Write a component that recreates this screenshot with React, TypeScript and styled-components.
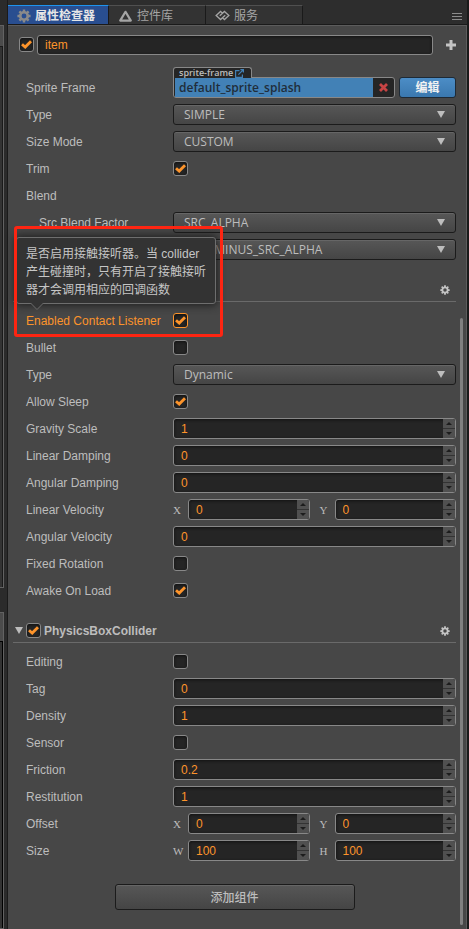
import React, { useId, useState } from "react";
import styled, { createGlobalStyle, css } from "styled-components";

const sans = `"Liberation Sans", Arial, "Noto Sans CJK SC", sans-serif`;
const ui = `"Open Sans", "Noto Sans CJK SC", sans-serif`;
const orange = "#fd942b";

const GlobalStyle = createGlobalStyle`
  *, *::before, *::after { box-sizing: border-box; }
  html, body, #root { height: 100%; }
  body { margin: 0; background: #2b2b2b; color: #bdbdbd; font: 12px/18px ${sans}; overflow: hidden; }
  button, input, select { font: inherit; color: inherit; margin: 0; }
  button { cursor: pointer; }
  svg { display: block; flex: none; }
`;

/* ---------- icons ---------- */

const Gear = ({ size }: { size: number }) => (
  <svg width={size} height={size} viewBox="0 0 16 16" fill="none" stroke="currentColor">
    <circle cx="8" cy="8" r="4.3" strokeWidth="3" />
    <path
      strokeWidth="2.8"
      d="M8 .5v3M8 12.5v3M.5 8h3M12.5 8h3M2.7 2.7l2.1 2.1M11.2 11.2l2.1 2.1M2.7 13.3l2.1-2.1M11.2 4.8l2.1-2.1"
    />
  </svg>
);

const Triangle = () => (
  <svg width="15" height="12" viewBox="0 0 15 12" fill="none" stroke="currentColor">
    <path d="M7.5 1.8 12.8 10.6H2.2Z" strokeWidth="2.2" strokeLinejoin="round" />
  </svg>
);

const Links = () => (
  <svg width="15" height="11" viewBox="0 0 17 12" fill="none" stroke="currentColor">
    <path
      d="M8.2 3.2 6.3 1.4 1.3 6l5 4.6L11.6 5.6M5.4 6.4l5.3-5L15.7 6l-5 4.6-1.9-1.8"
      strokeWidth="1.5"
    />
  </svg>
);

const Bars = () => (
  <svg width="10" height="9" viewBox="0 0 10 9" stroke="currentColor">
    <path d="M0 1.5h10M0 4.5h10M0 7.5h10" />
  </svg>
);

const Plus = () => (
  <svg width="10" height="10" viewBox="0 0 10 10" stroke="currentColor" strokeWidth="3">
    <path d="M5 0v10M0 5h10" />
  </svg>
);

const Check = () => (
  <svg width="11" height="9" viewBox="0 0 11 9" fill="none" stroke={orange} strokeWidth="2.8">
    <path d="M1 4.2 4.2 7.1 10 1.2" />
  </svg>
);

const Cross = () => (
  <svg width="9" height="9" viewBox="0 0 9 9" stroke="#c84444" strokeWidth="2.8">
    <path d="M1 1l7 7M8 1 1 8" />
  </svg>
);

const Popout = () => (
  <svg width="9" height="9" viewBox="0 0 9 9" fill="none" stroke="#4281b6" strokeWidth="1.2">
    <path d="M4.5 1.6H.6v6.8h6.8V5.5M3.4 5.6 8 1M5.4.6h3v3" />
  </svg>
);

const Arrow = ({ up, small }: { up?: boolean; small?: boolean }) => (
  <svg width={small ? 6 : 8} height={small ? 3 : 7} viewBox="0 0 8 7" preserveAspectRatio="none" fill="currentColor">
    <path d={up ? "M0 7h8L4 0z" : "M0 0h8L4 7z"} />
  </svg>
);

/* ---------- frame ---------- */

const Window = styled.div`
  display: flex;
  min-height: 100%;
  background: #2b2b2b;
`;

const Neighbours = styled.div`
  width: 7px;
  flex: none;
  display: flex;
  flex-direction: column;
  gap: 24px;
  padding-top: 25px;
`;

const NeighbourPanel = styled.div<{ $grow: number; $header: number; $edge: string }>`
  flex: ${(p) => p.$grow} 1 0;
  width: 4px;
  padding-top: ${(p) => p.$header}px;
  background: #4b4b4b;
  border: solid #626262;
  border-width: 1px 1px 1px 0;
  &::after {
    content: "";
    display: block;
    height: 100%;
    background: #333;
    border: solid ${(p) => p.$edge};
    border-width: 1px 1px 0 0;
  }
`;

const Inspector = styled.main`
  flex: 1;
  min-width: 0;
  display: flex;
  flex-direction: column;
  border: solid #1a1a1a;
  border-width: 0 2px 0 1px;
`;

const TabBar = styled.div`
  display: flex;
  align-items: flex-end;
  height: 25px;
  background: #2d2d2d;
  border-bottom: 1px solid #1a1a1a;
`;

const Tab = styled.button<{ $active?: boolean }>`
  display: flex;
  align-items: center;
  gap: 4px;
  width: 97px;
  height: 19px;
  padding: 1px 8px 0 9px;
  border: 0;
  border-top: 1px solid #505050;
  border-right: 1px solid #1a1a1a;
  background: #333;
  color: #a5a5a5;
  font-size: 12px;
  line-height: 18px;
  white-space: nowrap;
  ${(p) =>
    p.$active &&
    css`
      width: 101px;
      border-top-color: #1e94ee;
      background: #294e90;
      color: #e6e6e6;
      font-weight: 700;
      svg { color: #8a8a8a; }
    `}
`;

const MenuButton = styled.button`
  margin-left: auto;
  padding: 4px 5px 3px;
  border: 0;
  background: none;
  color: #8c8c8c;
`;

const Body = styled.div`
  flex: 1;
  display: flex;
  background: #474747;
  border: solid #5c5c5c;
  border-width: 1px 1px 0 0;
`;

const Content = styled.div`
  flex: 1;
  min-width: 0;
  padding: 5px 4px 19px 5px;
`;

const Scrollbar = styled.div`
  width: 3px;
  margin: 292px 3px 4px 0;
  border-radius: 2px;
  background: #808080;
`;

/* ---------- controls ---------- */

const well = css`
  border: 1px solid #888;
  border-radius: 3px;
  background: #252525;
  box-shadow: inset 0 1px 3px #111;
`;

const TickBox = styled.span<{ $hot?: boolean }>`
  display: inline-grid;
  width: 15px;
  height: 15px;
  place-items: center;
  color: ${(p) => (p.$hot ? orange : "#888")};
  input, svg { grid-area: 1 / 1; }
  svg { pointer-events: none; z-index: 1; }
  input {
    ${well}
    appearance: none;
    width: 15px;
    height: 15px;
    border-color: currentColor;
  }
`;

function Tick({ id, checked, hot, label }: { id?: string; checked?: boolean; hot?: boolean; label?: string }) {
  const [on, setOn] = useState(!!checked);
  return (
    <TickBox $hot={hot}>
      <input id={id} type="checkbox" aria-label={label} checked={on} onChange={() => setOn(!on)} />
      {on && <Check />}
    </TickBox>
  );
}

const SelectBox = styled.span`
  display: grid;
  align-items: center;
  color: #bdbdbd;
  select, svg { grid-area: 1 / 1; }
  svg { justify-self: end; margin-right: 11px; pointer-events: none; }
  select {
    appearance: none;
    width: 100%;
    height: 21px;
    padding: 0 24px 0 10px;
    border: 1px solid #1b1b1b;
    border-radius: 3px;
    background: linear-gradient(#575757, #454545);
    box-shadow: inset 0 1px #666;
    font: 12px/18px ${ui};
  }
`;

function Select({ id, value, label }: { id?: string; value: string; label?: string }) {
  return (
    <SelectBox>
      <select id={id} aria-label={label} defaultValue={value}>
        <option>{value}</option>
      </select>
      <Arrow />
    </SelectBox>
  );
}

const NumberBox = styled.span`
  ${well}
  flex: 1;
  min-width: 0;
  display: flex;
  height: 21px;
  overflow: hidden;
  input {
    flex: 1;
    min-width: 0;
    padding: 0 7px;
    border: 0;
    background: none;
    color: ${orange};
  }
`;

const Stepper = styled.span`
  display: grid;
  grid-template-rows: 1fr 1fr;
  gap: 1px;
  width: 12px;
  background: #333;
  button {
    display: grid;
    place-items: center;
    min-height: 0;
    padding: 0;
    border: 0;
    background: #505050;
    color: #1c1c1c;
  }
`;

function NumberField({ id, value, label }: { id?: string; value: number; label?: string }) {
  const [text, setText] = useState(String(value));
  const step = (by: number) => setText(String(Number(text) + by));
  return (
    <NumberBox>
      <input id={id} aria-label={label} inputMode="decimal" value={text} onChange={(e) => setText(e.target.value)} />
      <Stepper>
        <button type="button" aria-label="+" onClick={() => step(1)}>
          <Arrow up small />
        </button>
        <button type="button" aria-label="-" onClick={() => step(-1)}>
          <Arrow small />
        </button>
      </Stepper>
    </NumberBox>
  );
}

const Pair = styled.span`
  display: flex;
  gap: 10px;
  min-width: 0;
`;

const Axis = styled.label`
  flex: 1;
  min-width: 0;
  display: flex;
  align-items: center;
  > b {
    width: 15px;
    font: 11px/18px "Liberation Serif", serif;
  }
`;

function Vector({ axes, values }: { axes: string; values: [number, number] }) {
  const id = useId();
  return (
    <Pair>
      {values.map((v, i) => (
        <Axis key={i} htmlFor={id + i}>
          <b>{axes[i]}</b>
          <NumberField id={id + i} value={v} />
        </Axis>
      ))}
    </Pair>
  );
}

/* ---------- rows ---------- */

const PropertyRow = styled.div<{ $hot?: boolean }>`
  position: relative;
  display: grid;
  grid-template-columns: 147px minmax(0, 1fr);
  align-items: center;
  height: 27px;
  margin-left: 13px;
  color: ${(p) => (p.$hot ? orange : "inherit")};
`;

const PropertyLabel = styled.label<{ $indent?: boolean }>`
  padding-left: ${(p) => (p.$indent ? 13 : 0)}px;
  white-space: nowrap;
`;

const Cell = styled.div`
  display: grid;
  grid-template-columns: minmax(0, 1fr);
  min-width: 0;
  grid-column: 2;
`;

type RowProps = {
  label?: string;
  indent?: boolean;
  hot?: boolean;
  extra?: React.ReactNode;
  children?: (id: string) => React.ReactNode;
};

function Property({ label, indent, hot, extra, children }: RowProps) {
  const id = useId();
  return (
    <PropertyRow $hot={hot}>
      {label && (
        <PropertyLabel $indent={indent} htmlFor={id}>
          {label}
        </PropertyLabel>
      )}
      {children && <Cell>{children(id)}</Cell>}
      {extra}
    </PropertyRow>
  );
}

const NodeRow = styled.div`
  display: flex;
  align-items: center;
  gap: 3px;
  height: 27px;
  margin-bottom: 16px;
  padding-left: 6px;
`;

const NameInput = styled.input`
  ${well}
  flex: 1;
  min-width: 0;
  height: 20px;
  padding: 0 7px;
  && { color: ${orange}; }
`;

const IconButton = styled.button`
  padding: 0;
  border: 0;
  background: none;
  color: #c4c4c4;
`;

const AddNode = styled(IconButton)`
  margin-left: 10px;
`;

const SectionHeader = styled.header`
  display: flex;
  align-items: center;
  gap: 3px;
  height: 26px;
  margin: 13px 0 5px;
  padding: 2px 6px 0 2px;
  border-bottom: 1px solid #6a6a6a;
  font-size: 12px;
  h2 { margin: 0; font: inherit; font-weight: 700; }
  ${IconButton} { margin-left: auto; }
`;

const AssetRow = styled.div`
  display: flex;
  gap: 4px;
`;

const Asset = styled.div`
  position: relative;
  flex: 1;
  min-width: 0;
  display: flex;
  height: 21px;
  padding-left: 1px;
  border: 1px solid #888;
  border-radius: 0 3px 3px 3px;
  background: #252525;
  font-family: ${ui};
`;

const AssetType = styled.span`
  position: absolute;
  left: -1px;
  bottom: 100%;
  display: flex;
  align-items: center;
  gap: 2px;
  height: 11px;
  padding: 0 7px 0 5px;
  border: 1px solid #888;
  border-bottom: 0;
  border-radius: 3px 3px 0 0;
  background: #252525;
  font-size: 9px;
  font-weight: 600;
  line-height: 10px;
  white-space: nowrap;
`;

const AssetName = styled.span`
  flex: 1;
  padding-left: 4px;
  background: #4281b6;
  color: #202d3a;
  font-size: 12px;
  line-height: 19px;
  font-weight: 600;
`;

const ClearButton = styled(IconButton)`
  display: grid;
  place-items: center;
  width: 21px;
`;

const EditButton = styled.button`
  width: 57px;
  height: 21px;
  padding: 0;
  border: 1px solid #1e2a36;
  border-radius: 3px;
  background: linear-gradient(#4c8dc6, #3a78af);
  && { color: #f2f2f2; }
  font-size: 12px;
  font-weight: 700;
  line-height: 18px;
`;

const AddComponent = styled.button`
  display: block;
  width: 240px;
  height: 26px;
  margin: 20px auto 0;
  padding: 2px 0 0;
  border: 1px solid #1b1b1b;
  border-radius: 3px;
  background: linear-gradient(#575757, #454545);
  box-shadow: inset 0 1px #666;
  font-size: 12px;
  font-weight: 500;
`;

/* ---------- overlays ---------- */

const Tooltip = styled.div`
  position: absolute;
  z-index: 2;
  left: -10px;
  bottom: 30px;
  padding: 7px 9px 4px;
  border: 1px solid #6e6e6e;
  border-radius: 3px;
  background: #333;
  box-shadow: 0 0 8px 1px #1c1c1c;
  color: #c6c6c6;
  font-size: 12px;
  line-height: 18px;
  white-space: nowrap;
  svg { position: absolute; left: 13px; top: 100%; }
`;

const Highlight = styled.div`
  position: absolute;
  z-index: 3;
  left: -12px;
  bottom: -3px;
  width: 209px;
  height: 111px;
  border: 3px solid #fe2512;
  border-radius: 3px;
  pointer-events: none;
`;

const ContactHelp = () => (
  <>
    <Tooltip role="tooltip">
      是否启用接触接听器。当 collider
      <br />
      产生碰撞时，只有开启了接触接听
      <br />
      器才会调用相应的回调函数
      <svg width="14" height="8" viewBox="0 0 14 8" fill="#333" stroke="#6e6e6e">
        <path d="M0-.5 7 6.5 14-.5" />
      </svg>
    </Tooltip>
    <Highlight />
  </>
);

export default function App() {
  return (
    <Window>
      <GlobalStyle />
      <Neighbours>
        <NeighbourPanel $grow={540} $header={20} $edge="#1a1a1a" />
        <NeighbourPanel $grow={287} $header={28} $edge="#000" />
      </Neighbours>
      <Inspector>
        <TabBar>
          <Tab $active>
            <Gear size={14} />
            属性检查器
          </Tab>
          <Tab>
            <Triangle />
            控件库
          </Tab>
          <Tab>
            <Links />
            服务
          </Tab>
          <MenuButton aria-label="菜单">
            <Bars />
          </MenuButton>
        </TabBar>
        <Body>
          <Content>
            <NodeRow>
              <Tick checked label="active" />
              <NameInput aria-label="name" defaultValue="item" />
              <AddNode aria-label="add">
                <Plus />
              </AddNode>
            </NodeRow>

            <Property label="Sprite Frame">
              {(id) => (
                <AssetRow>
                  <Asset>
                    <AssetType>
                      sprite-frame <Popout />
                    </AssetType>
                    <AssetName>default_sprite_splash</AssetName>
                    <ClearButton aria-label="clear">
                      <Cross />
                    </ClearButton>
                  </Asset>
                  <EditButton id={id}>编辑</EditButton>
                </AssetRow>
              )}
            </Property>
            <Property label="Type">{(id) => <Select id={id} value="SIMPLE" />}</Property>
            <Property label="Size Mode">{(id) => <Select id={id} value="CUSTOM" />}</Property>
            <Property label="Trim">{(id) => <Tick id={id} checked />}</Property>
            <Property label="Blend" />
            <Property label="Src Blend Factor" indent>
              {(id) => <Select id={id} value="SRC_ALPHA" />}
            </Property>
            <Property>{(id) => <Select id={id} label="Blend factor" value="ONE_MINUS_SRC_ALPHA" />}</Property>

            <SectionHeader>
              <IconButton aria-label="options">
                <Gear size={10} />
              </IconButton>
            </SectionHeader>
            <Property label="Enabled Contact Listener" hot extra={<ContactHelp />}>
              {(id) => <Tick id={id} checked hot />}
            </Property>
            <Property label="Bullet">{(id) => <Tick id={id} />}</Property>
            <Property label="Type">{(id) => <Select id={id} value="Dynamic" />}</Property>
            <Property label="Allow Sleep">{(id) => <Tick id={id} checked />}</Property>
            <Property label="Gravity Scale">{(id) => <NumberField id={id} value={1} />}</Property>
            <Property label="Linear Damping">{(id) => <NumberField id={id} value={0} />}</Property>
            <Property label="Angular Damping">{(id) => <NumberField id={id} value={0} />}</Property>
            <Property label="Linear Velocity">{() => <Vector axes="XY" values={[0, 0]} />}</Property>
            <Property label="Angular Velocity">{(id) => <NumberField id={id} value={0} />}</Property>
            <Property label="Fixed Rotation">{(id) => <Tick id={id} />}</Property>
            <Property label="Awake On Load">{(id) => <Tick id={id} checked />}</Property>

            <SectionHeader>
              <Arrow />
              <Tick checked label="PhysicsBoxCollider" />
              <h2>PhysicsBoxCollider</h2>
              <IconButton aria-label="options">
                <Gear size={10} />
              </IconButton>
            </SectionHeader>
            <Property label="Editing">{(id) => <Tick id={id} />}</Property>
            <Property label="Tag">{(id) => <NumberField id={id} value={0} />}</Property>
            <Property label="Density">{(id) => <NumberField id={id} value={1} />}</Property>
            <Property label="Sensor">{(id) => <Tick id={id} />}</Property>
            <Property label="Friction">{(id) => <NumberField id={id} value={0.2} />}</Property>
            <Property label="Restitution">{(id) => <NumberField id={id} value={1} />}</Property>
            <Property label="Offset">{() => <Vector axes="XY" values={[0, 0]} />}</Property>
            <Property label="Size">{() => <Vector axes="WH" values={[100, 100]} />}</Property>

            <AddComponent>添加组件</AddComponent>
          </Content>
          <Scrollbar />
        </Body>
      </Inspector>
    </Window>
  );
}
